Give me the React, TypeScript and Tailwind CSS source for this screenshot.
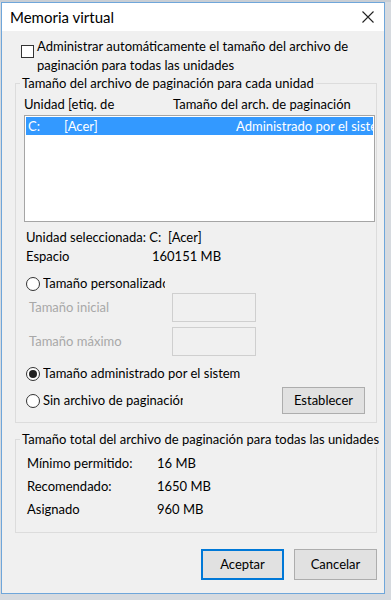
import React from "react";

// Windows "Memoria virtual" dialog

function Radio({ checked }: { checked?: boolean }) {
  return (
    <span className="w-[14px] h-[14px] rounded-full border border-[#333] bg-white flex items-center justify-center shrink-0">
      {checked && <span className="w-[8px] h-[8px] rounded-full bg-[#222]" />}
    </span>
  );
}

function Field() {
  return <div className="w-[84px] h-[29px] border border-[#cfcfcf] bg-[#f0f0f0]" />;
}

export default function App() {
  return (
    <div className="w-[391px] h-[600px] overflow-hidden bg-[#d6dadf] font-['Lato',sans-serif] text-[13px] text-black">
      <div className="h-[2px] bg-[#c9ced4]" />
      <div className="ml-[1px] w-[384px] h-[592px] border border-[#6fa6da] bg-[#f0f0f0] flex flex-col overflow-hidden">
        {/* Title bar */}
        <div className="h-[28px] bg-white flex items-center justify-between pl-[8px] pr-[9px] shrink-0">
          <span className="text-[15px] leading-[20px]">Memoria virtual</span>
          <svg width="12" height="12" viewBox="0 0 12 12" className="mr-[1px]">
            <path d="M0.5 0.5 L11.5 11.5 M11.5 0.5 L0.5 11.5" stroke="#222" strokeWidth="1.1" />
          </svg>
        </div>

        <div className="flex-1 flex flex-col pt-[6px]">
          {/* Auto manage checkbox */}
          <div className="flex items-start pl-[19px]">
            <span className="mt-[8px] w-[13px] h-[13px] border border-[#333] bg-white shrink-0" />
            <span className="ml-[3px] leading-[19px]">
              Administrar automáticamente el tamaño del archivo de
              <br />
              paginación para todas las unidades
            </span>
          </div>

          {/* Per-drive group */}
          <fieldset className="ml-[13px] w-[362px] border border-[#dcdcdc] pb-[8px]">
            <legend className="ml-[4px] px-[2px] leading-[16px] whitespace-nowrap">
              Tamaño del archivo de paginación para cada unidad
            </legend>
            <div className="flex pl-[8px] pt-[4px] leading-[18px]">
              <span className="w-[149px]">Unidad [etiq. de</span>
              <span>Tamaño del arch. de paginación</span>
            </div>
            <div className="ml-[8px] mt-[2px] w-[351px] h-[107px] border border-[#a5a5a5] bg-white p-[1px] overflow-hidden">
              <div className="h-[18px] bg-[#3399ff] text-white flex items-center leading-[18px] whitespace-nowrap">
                <span className="pl-[2px] w-[38px] shrink-0">C:</span>
                <span className="w-[172px] shrink-0">[Acer]</span>
                <span>Administrado por el sistema</span>
              </div>
            </div>

            <div className="pl-[10px] mt-[6px] leading-[19px]">
              <div>Unidad seleccionada: C:&nbsp; [Acer]</div>
              <div className="flex">
                <span className="w-[126px]">Espacio</span>
                <span>160151 MB</span>
              </div>
            </div>

            <div className="pl-[10px] mt-[8px] flex items-center h-[19px]">
              <Radio />
              <span className="ml-[3px] w-[122px] overflow-hidden whitespace-nowrap">Tamaño personalizado</span>
            </div>
            <div className="pl-[13px] flex items-center h-[29px]">
              <span className="w-[143px] text-[#a8a8a8]">Tamaño inicial</span>
              <Field />
            </div>
            <div className="pl-[13px] mt-[5px] flex items-center h-[29px]">
              <span className="w-[143px] text-[#a8a8a8]">Tamaño máximo</span>
              <Field />
            </div>

            <div className="pl-[10px] mt-[8px] flex items-center h-[19px]">
              <Radio checked />
              <span className="ml-[3px] w-[197px] overflow-hidden whitespace-nowrap">Tamaño administrado por el sistema</span>
            </div>
            <div className="pl-[10px] mt-[4px] flex items-center h-[27px]">
              <Radio />
              <span className="ml-[3px] w-[140px] overflow-hidden whitespace-nowrap">Sin archivo de paginación</span>
              <button className="ml-[99px] w-[83px] h-[27px] bg-[#e1e1e1] border border-[#adadad]">Establecer</button>
            </div>
          </fieldset>

          {/* Totals group */}
          <fieldset className="ml-[13px] mt-[8px] w-[362px] border border-[#dcdcdc] pt-[5px] pb-[11px] min-w-0">
            <legend className="ml-[4px] px-[2px] leading-[16px] whitespace-nowrap">
              Tamaño total del archivo de paginación para todas las unidades
            </legend>
            <div className="pl-[11px] leading-[23px]">
              <div className="flex">
                <span className="w-[130px]">Mínimo permitido:</span>
                <span>16 MB</span>
              </div>
              <div className="flex">
                <span className="w-[130px]">Recomendado:</span>
                <span>1650 MB</span>
              </div>
              <div className="flex">
                <span className="w-[130px]">Asignado</span>
                <span>960 MB</span>
              </div>
            </div>
          </fieldset>

          {/* Buttons */}
          <div className="flex justify-end gap-[10px] pr-[7px] mt-[16px]">
            <button className="w-[83px] h-[31px] bg-[#e1e1e1] border-2 border-[#0078d7]">Aceptar</button>
            <button className="w-[83px] h-[31px] bg-[#e1e1e1] border border-[#adadad]">Cancelar</button>
          </div>
        </div>
      </div>
    </div>
  );
}
